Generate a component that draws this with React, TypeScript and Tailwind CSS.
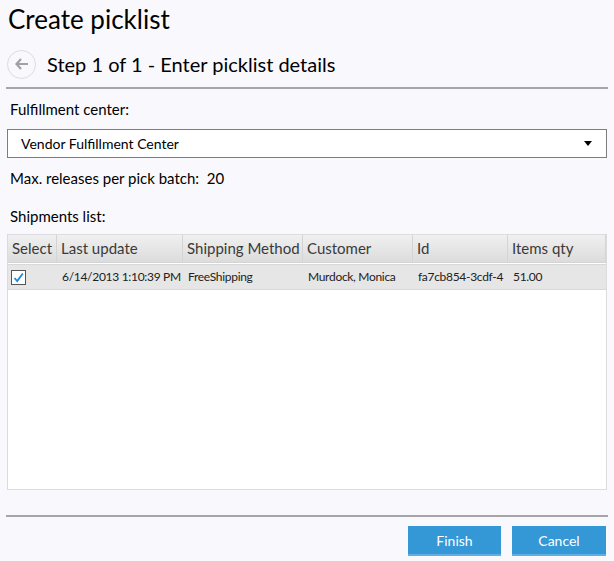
import React from "react";

const cols = [
  { label: "Select", w: "w-[49px]" },
  { label: "Last update", w: "w-[126px]" },
  { label: "Shipping Method", w: "w-[120px]" },
  { label: "Customer", w: "w-[110px]" },
  { label: "Id", w: "w-[95px]" },
  { label: "Items qty", w: "flex-1" },
];

const row = ["6/14/2013 1:10:39 PM", "FreeShipping", "Murdock, Monica", "fa7cb854-3cdf-4", "51.00"];

const App = () => {
  return (
    <div className="w-[614px] h-[561px] bg-[#f9f9fd] text-black font-['Lato','Liberation_Sans',sans-serif] flex flex-col overflow-hidden">
      <h1 className="text-[26px] leading-[30px] pl-[8px] pt-[4px]">Create picklist</h1>

      <div className="flex items-center gap-[11px] pl-[7px] mt-[15px] h-[30px]">
        <div className="w-[29px] h-[29px] rounded-full border border-[#dcdce0] flex items-center justify-center">
          <svg width="14" height="12" viewBox="0 0 14 12">
            <path d="M6 1 L1.5 6 L6 11 M1.5 6 H13" stroke="#a0a0a6" strokeWidth="2.2" fill="none" />
          </svg>
        </div>
        <span className="text-[20px] leading-[26px]">Step 1 of 1 - Enter picklist details</span>
      </div>

      <div className="mx-[6px] mt-[8px] h-[2px] bg-[#a6a6aa]" />

      <div className="px-[7px] text-[15px]">
        <div className="pl-[3px] mt-[11px] leading-[18px]">Fulfillment center:</div>
        <div className="mt-[11px] h-[29px] border border-[#7d7d7d] bg-white flex items-center justify-between pl-[13px] pr-[14px] text-[14px]">
          <span>Vendor Fulfillment Center</span>
          <svg width="8" height="5" viewBox="0 0 8 5">
            <path d="M0 0 H8 L4 5 Z" fill="#000" />
          </svg>
        </div>
        <div className="pl-[3px] mt-[11px] leading-[18px]">Max. releases per pick batch:&nbsp; 20</div>
        <div className="pl-[3px] mt-[20px] leading-[18px]">Shipments list:</div>

        <div className="mt-[9px] h-[256px] border border-[#dcdce0] bg-white flex flex-col">
          <div className="flex h-[28px] bg-gradient-to-b from-[#f0f0f0] to-[#dcdcdc] border-b border-[#d4d4d4]">
            {cols.map((c) => (
              <div
                key={c.label}
                className={`${c.w} shrink-0 border-r border-[#d4d4d4] flex items-center pl-[4px] text-[#3a3a3a] text-[15px] whitespace-nowrap`}
              >
                {c.label}
              </div>
            ))}
          </div>
          <div className="flex h-[26px] mt-[1px] bg-[#e6e6e6] border-y border-[#d8d8d8] text-[12px] tracking-[-0.3px]">
            <div className="w-[49px] shrink-0 flex items-center pl-[3px]">
              <div className="w-[15px] h-[15px] border border-[#555] bg-white flex items-center justify-center">
                <svg width="11" height="11" viewBox="0 0 11 11">
                  <path d="M1.5 6 L4.2 9 L9.8 1.5" stroke="#1a8ad6" strokeWidth="1.8" fill="none" />
                </svg>
              </div>
            </div>
            {row.map((v, i) => (
              <div
                key={v}
                className={`${cols[i + 1].w} shrink-0 flex items-center pl-[5px] text-[#222] whitespace-nowrap`}
              >
                {v}
              </div>
            ))}
          </div>
        </div>
      </div>

      <div className="mx-[6px] mt-[25px] h-[2px] bg-[#a6a6aa]" />

      <div className="flex justify-end gap-[11px] pr-[8px] mt-[9px]">
        <button className="w-[93px] h-[30px] bg-[#3497d6] border-b-2 border-[#5eb0e4] text-white text-[14px]">Finish</button>
        <button className="w-[94px] h-[30px] bg-[#3497d6] border-b-2 border-[#5eb0e4] text-white text-[14px]">Cancel</button>
      </div>
    </div>
  );
};

export default App;
